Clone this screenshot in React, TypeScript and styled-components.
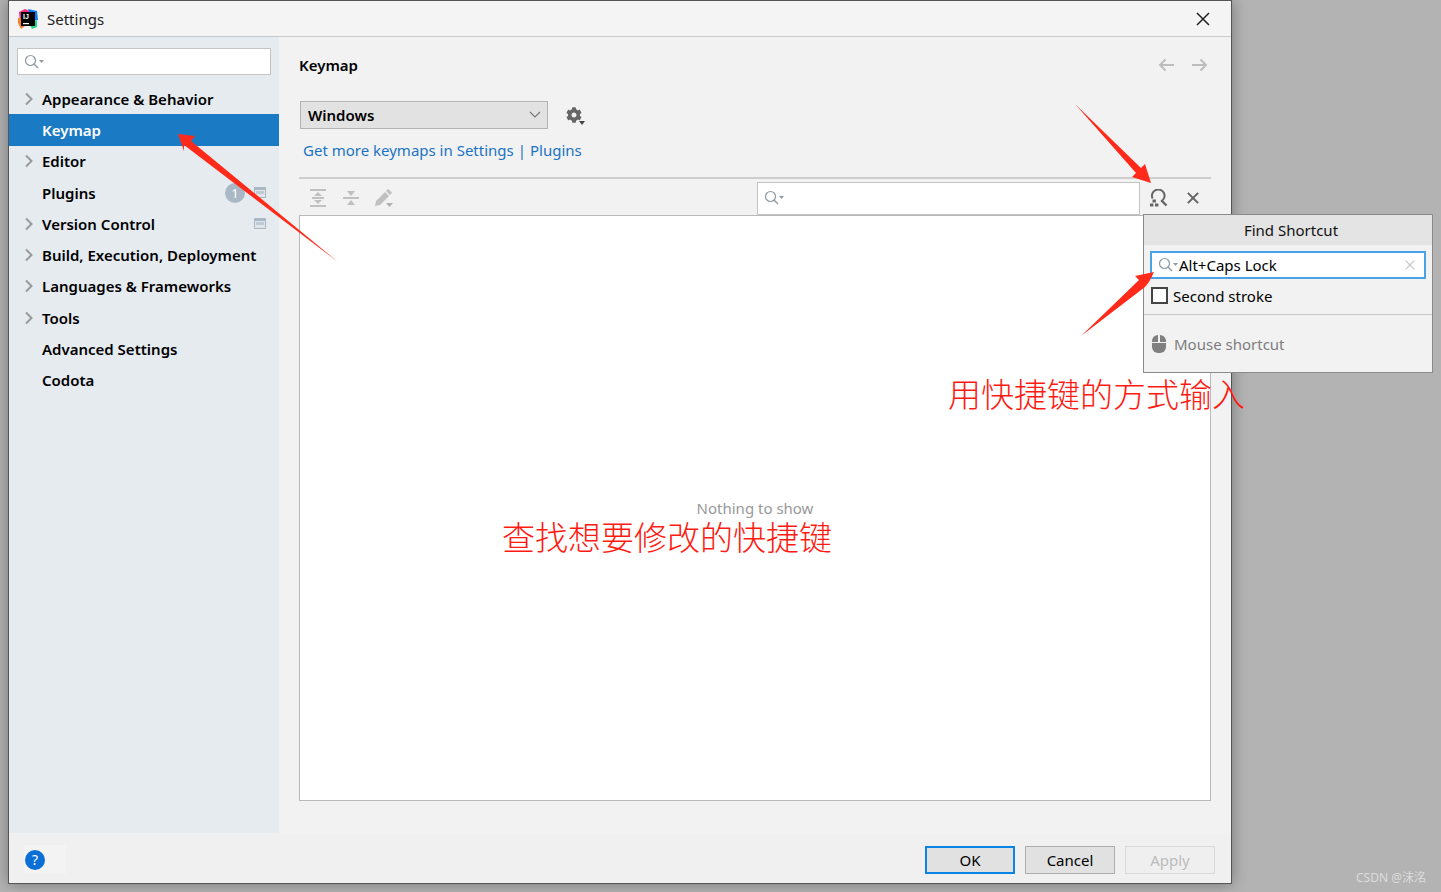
import React from 'react'
import styled, { createGlobalStyle } from 'styled-components'
import { FaCog } from 'react-icons/fa'

const GlobalStyle = createGlobalStyle`
  html, body {
    margin: 0;
    padding: 0;
    background: #b3b3b3;
    overflow: hidden;
  }
  * {
    box-sizing: border-box;
  }
`

const Page = styled.div`
  position: relative;
  width: 1441px;
  height: 892px;
  padding-left: 8px;
  overflow: hidden;
  background: #b3b3b3;
  font-family: 'Noto Sans', 'Noto Sans CJK SC', sans-serif;
  font-size: 15px;
  color: #000;
`

const Dialog = styled.div`
  display: flex;
  flex-direction: column;
  width: 1224px;
  height: 884px;
  border: 1px solid #555;
  background: #f2f2f2;
  box-shadow: 0 0 14px rgba(0, 0, 0, 0.35);
`

const TitleBar = styled.div`
  display: flex;
  align-items: center;
  flex: 0 0 36px;
  padding: 0 21px 0 9px;
  border-bottom: 1px solid #c9c9c9;
  background: #f4f4f4;
`

const TitleText = styled.span`
  margin-left: 9px;
  font-size: 15px;
  color: #222;
`

const CloseButton = styled.div`
  display: flex;
  margin-left: auto;
`

const Body = styled.div`
  display: flex;
  flex: 1;
  min-height: 0;
`

const Sidebar = styled.div`
  flex: 0 0 270px;
  padding-top: 11px;
  background: #e6ebf0;
`

const SearchBox = styled.div<{ $w?: number; $h: number }>`
  display: flex;
  align-items: center;
  width: ${({ $w }) => ($w ? `${$w}px` : '100%')};
  height: ${({ $h }) => $h}px;
  padding-left: 6px;
  border: 1px solid #c4c4c4;
  background: #fff;
`

const SidebarSearch = styled.div`
  padding: 0 8px;
`

const Tree = styled.div`
  margin-top: 8px;
`

const Row = styled.div<{ $selected?: boolean }>`
  display: flex;
  align-items: center;
  height: 31.3px;
  padding: 0 13px 0 14px;
  font-weight: 600;
  font-size: 15px;
  background: ${({ $selected }) => ($selected ? '#1b7ac4' : 'transparent')};
  color: ${({ $selected }) => ($selected ? '#fff' : '#000')};
`

const ChevronSlot = styled.span`
  display: flex;
  flex: 0 0 19px;
`

const RowEnd = styled.span`
  display: flex;
  align-items: center;
  margin-left: auto;
`

const Badge = styled.span`
  display: flex;
  align-items: center;
  justify-content: center;
  width: 20px;
  height: 20px;
  margin-right: 9px;
  border-radius: 50%;
  background: #a9b8c4;
  color: #fff;
  font-size: 13px;
  font-weight: 400;
`

const Main = styled.div`
  display: flex;
  flex-direction: column;
  flex: 1;
  min-width: 0;
  padding: 14px 20px 32px;
  background: #f2f2f2;
`

const Header = styled.div`
  display: flex;
  align-items: center;
  justify-content: space-between;
  height: 28px;
  font-weight: 600;
`

const NavArrows = styled.div`
  display: flex;
  gap: 16px;
  padding-right: 3px;
`

const KeymapRow = styled.div`
  display: flex;
  align-items: center;
  margin-top: 22px;
  padding-left: 1px;
`

const Select = styled.div`
  display: flex;
  align-items: center;
  justify-content: space-between;
  width: 248px;
  height: 28px;
  padding: 0 6px 0 7px;
  border: 1px solid #b4b4b4;
  background: #e2e2e2;
  font-weight: 600;
`

const GearButton = styled.div`
  position: relative;
  display: flex;
  margin-left: 18px;
  color: #666;
`

const GearCaret = styled.span`
  position: absolute;
  right: -3px;
  bottom: -2px;
  border: 3px solid transparent;
  border-top: 4px solid #444;
  border-bottom: 0;
`

const LinkRow = styled.div`
  display: flex;
  align-items: center;
  height: 22px;
  margin-top: 10px;
  padding-left: 4px;
  color: #333;
`

const Link = styled.a`
  color: #1a73c4;
`

const Sep = styled.span`
  margin: 0 4px;
  color: #1a73c4;
`

const Toolbar = styled.div`
  display: flex;
  align-items: center;
  height: 38px;
  margin-top: 16px;
  padding: 2px 1px 0 3px;
  border-top: 2px solid #cdcdcd;
`

const ToolButton = styled.div<{ $w: number }>`
  display: flex;
  align-items: center;
  justify-content: center;
  width: ${({ $w }) => $w}px;
`

const ToolSpacer = styled.div`
  flex: 1;
`

const ToolbarSearch = styled(SearchBox)`
  margin-right: 2px;
`

const Panel = styled.div`
  display: flex;
  align-items: center;
  justify-content: center;
  flex: 1;
  border: 1px solid #b9b9b9;
  background: #fff;
  color: #999;
`

const Footer = styled.div`
  display: flex;
  align-items: flex-start;
  flex: 0 0 50px;
  padding: 12px 16px 0 15px;
  background: #f0f0f0;
`

const HelpPatch = styled.div`
  display: flex;
  align-items: center;
  width: 42px;
  height: 29px;
  padding-left: 1px;
  background: #f3f3f3;
`

const HelpCircle = styled.div`
  display: flex;
  align-items: center;
  justify-content: center;
  width: 20px;
  height: 20px;
  border-radius: 50%;
  background: #0b6fd6;
  color: #fff;
  font-size: 14px;
`

const Buttons = styled.div`
  display: flex;
  gap: 10px;
  margin-top: 1px;
  margin-left: auto;
`

const Button = styled.div<{ $variant?: 'default' | 'disabled' }>`
  display: flex;
  align-items: center;
  justify-content: center;
  width: 90px;
  height: 28px;
  font-size: 15px;
  border: ${({ $variant }) =>
    $variant === 'default'
      ? '2px solid #0c84e4'
      : $variant === 'disabled'
        ? '1px solid #dadada'
        : '1px solid #adadad'};
  background: ${({ $variant }) => ($variant === 'disabled' ? '#efefef' : '#e1e1e1')};
  color: ${({ $variant }) => ($variant === 'disabled' ? '#bcbcbc' : '#000')};
`

const Popup = styled.div`
  position: absolute;
  left: 1143px;
  top: 214px;
  display: flex;
  flex-direction: column;
  width: 290px;
  height: 159px;
  border: 1px solid #8a8a8a;
  background: #f2f2f2;
`

const PopupTitle = styled.div`
  display: flex;
  align-items: center;
  justify-content: center;
  height: 30px;
  padding-left: 6px;
  background: #e4e4e4;
  color: #111;
`

const PopupInput = styled.div`
  display: flex;
  align-items: center;
  height: 28px;
  margin: 6px 6px 0;
  padding: 0 9px 0 6px;
  border: 2px solid #4aa3e8;
  background: #fff;
`

const PopupValue = styled.span`
  flex: 1;
  margin-left: 1px;
  color: #000;
`

const CheckRow = styled.div`
  display: flex;
  align-items: center;
  height: 31px;
  margin-top: 1px;
  padding-left: 7px;
  border-bottom: 0;
`

const CheckBox = styled.span`
  width: 17px;
  height: 17px;
  margin-right: 5px;
  border: 2px solid #444;
  background: #fff;
`

const PopupDivider = styled.div`
  height: 1px;
  margin-top: 3px;
  background: #c6c6c6;
`

const MouseRow = styled.div`
  display: flex;
  align-items: center;
  height: 56px;
  padding: 1px 0 0 8px;
  color: #7d7d7d;
`

const MouseLabel = styled.span`
  margin-left: 8px;
`

const Annotation = styled.div<{ $left: number; $top: number }>`
  position: absolute;
  left: ${({ $left }) => $left}px;
  top: ${({ $top }) => $top}px;
  font-family: 'Noto Sans CJK SC', sans-serif;
  font-size: 33px;
  line-height: 40px;
  font-weight: 300;
  color: #ff1a12;
  white-space: nowrap;
`

const ArrowLayer = styled.svg`
  position: absolute;
  left: 0;
  top: 0;
  pointer-events: none;
`

const Watermark = styled.div`
  position: absolute;
  right: 15px;
  top: 868px;
  font-size: 12px;
  color: #dcdcdc;
  white-space: nowrap;
`

const SearchIcon = ({ size = 20 }: { size?: number }) => (
  <svg width={size} height={16} viewBox="0 0 20 16" fill="none">
    <circle cx="6.5" cy="6.5" r="5" stroke="#8e9aa3" strokeWidth="1.2" />
    <path d="M10 10l4 4" stroke="#8e9aa3" strokeWidth="1.4" />
    <path d="M15 6h5l-2.5 3z" fill="#8e9aa3" />
  </svg>
)

const Chevron = () => (
  <svg width="12" height="14" viewBox="0 0 12 14" fill="none">
    <path d="M3 1.5L8.5 7 3 12.5" stroke="#9a9a9a" strokeWidth="2" />
  </svg>
)

const ProjectTag = () => (
  <svg width="12" height="11" viewBox="0 0 12 11">
    <path d="M0 0h12v11H0z" fill="#a9b8c4" />
    <path d="M1 3h10v7H1z" fill="#dfe5ea" />
    <path d="M2 4h8v3H2z" fill="#a9b8c4" opacity="0.6" />
  </svg>
)

const CloseIcon = ({ size = 14, color = '#333', width = 1.6 }: { size?: number; color?: string; width?: number }) => (
  <svg width={size} height={size} viewBox="0 0 14 14" fill="none">
    <path d="M1 1l12 12M13 1L1 13" stroke={color} strokeWidth={width} />
  </svg>
)

const NavArrow = ({ flip }: { flip?: boolean }) => (
  <svg width="17" height="14" viewBox="0 0 17 14" fill="none" transform={flip ? 'scale(-1 1)' : undefined}>
    <path d="M16 7H2M7.5 1.5L2 7l5.5 5.5" stroke="#bdbdbd" strokeWidth="2" />
  </svg>
)

const ExpandIcon = () => (
  <svg width="16" height="18" viewBox="0 0 16 18">
    <path d="M0 0h16v2H0zM0 16h16v2H0z" fill="#c0c0c0" />
    <path d="M8 3l4 4H4zM8 15l-4-4h8z" fill="#c0c0c0" />
    <path d="M2 8h12v2H2z" fill="#c0c0c0" />
  </svg>
)

const CollapseIcon = () => (
  <svg width="16" height="16" viewBox="0 0 16 16">
    <path d="M0 7h16v2H0z" fill="#c0c0c0" />
    <path d="M8 6L4 1h8zM8 10l4 5H4z" fill="#c0c0c0" />
  </svg>
)

const PencilIcon = () => (
  <svg width="19" height="18" viewBox="0 0 19 18">
    <path d="M1 17l1-5L11 3l4 4-9 9zM12 2l1.5-1.5a1 1 0 0 1 1.4 0l2.6 2.6a1 1 0 0 1 0 1.4L16 6z" fill="#c0c0c0" />
    <path d="M12 14h7l-3.5 4z" fill="#b0b0b0" />
  </svg>
)

const FindShortcutIcon = () => (
  <svg width="20" height="18" viewBox="0 0 20 18" fill="none">
    <path d="M3.6 9.5A6.3 6.3 0 1 1 12 12.4" stroke="#666" strokeWidth="2" />
    <path d="M12.5 11.5l5 5" stroke="#666" strokeWidth="2.4" />
    <path d="M3.5 10.5h3.4v3H3.5zM1 14.5h3.4v3H1zM6 14.5h3.4v3H6z" fill="#666" />
  </svg>
)

const MouseIcon = () => (
  <svg width="14" height="18" viewBox="0 0 14 18">
    <path d="M0 8h14v4a6 6 0 0 1-6 6H6a6 6 0 0 1-6-6z" fill="#808080" />
    <path d="M0 7V6a6 6 0 0 1 6-6v7zM8 0a6 6 0 0 1 6 6v1H8z" fill="#808080" />
  </svg>
)

const AppLogo = () => (
  <svg width="20" height="20" viewBox="0 0 20 20">
    <path d="M1 3l6-3 5 2-3 8-7 4z" fill="#f5317f" />
    <path d="M10 0l9 2 1 9-5 1z" fill="#087cfa" />
    <path d="M0 9l5 0 2 8-4 3-3-6z" fill="#fe7c2b" />
    <path d="M12 16l7-5 0 7-5 2z" fill="#21d789" />
    <path d="M3 3h14v14H3z" fill="#000" />
    <text x="5" y="10" fontSize="7" fontWeight="700" fill="#fff" fontFamily="'Liberation Sans', sans-serif">
      IJ
    </text>
    <path d="M5 14h6v1.2H5z" fill="#fff" />
  </svg>
)

const treeItems = [
  { label: 'Appearance & Behavior', chevron: true },
  { label: 'Keymap', selected: true },
  { label: 'Editor', chevron: true },
  { label: 'Plugins', badge: true, tag: true },
  { label: 'Version Control', chevron: true, tag: true },
  { label: 'Build, Execution, Deployment', chevron: true },
  { label: 'Languages & Frameworks', chevron: true },
  { label: 'Tools', chevron: true },
  { label: 'Advanced Settings' },
  { label: 'Codota' },
]

export default function App() {
  return (
    <Page>
      <GlobalStyle />
      <Dialog>
        <TitleBar>
          <AppLogo />
          <TitleText>Settings</TitleText>
          <CloseButton>
            <CloseIcon size={14} color="#222" width={1.5} />
          </CloseButton>
        </TitleBar>
        <Body>
          <Sidebar>
            <SidebarSearch>
              <SearchBox $h={27}>
                <SearchIcon />
              </SearchBox>
            </SidebarSearch>
            <Tree>
              {treeItems.map((item) => (
                <Row key={item.label} $selected={item.selected}>
                  <ChevronSlot>{item.chevron && <Chevron />}</ChevronSlot>
                  {item.label}
                  {item.tag && (
                    <RowEnd>
                      {item.badge && <Badge>1</Badge>}
                      <ProjectTag />
                    </RowEnd>
                  )}
                </Row>
              ))}
            </Tree>
          </Sidebar>
          <Main>
            <Header>
              Keymap
              <NavArrows>
                <NavArrow />
                <NavArrow flip />
              </NavArrows>
            </Header>
            <KeymapRow>
              <Select>
                Windows
                <svg width="12" height="8" viewBox="0 0 12 8" fill="none">
                  <path d="M1 1l5 5 5-5" stroke="#777" strokeWidth="1.2" />
                </svg>
              </Select>
              <GearButton>
                <FaCog size={16} />
                <GearCaret />
              </GearButton>
            </KeymapRow>
            <LinkRow>
              <Link>Get more keymaps in Settings</Link>
              <Sep>|</Sep>
              <Link>Plugins</Link>
            </LinkRow>
            <Toolbar>
              <ToolButton $w={32.5}>
                <ExpandIcon />
              </ToolButton>
              <ToolButton $w={32.5}>
                <CollapseIcon />
              </ToolButton>
              <ToolButton $w={32.5}>
                <PencilIcon />
              </ToolButton>
              <ToolSpacer />
              <ToolbarSearch $w={383} $h={33}>
                <SearchIcon />
              </ToolbarSearch>
              <ToolButton $w={34}>
                <FindShortcutIcon />
              </ToolButton>
              <ToolButton $w={34}>
                <CloseIcon size={12} color="#666" width={2.4} />
              </ToolButton>
            </Toolbar>
            <Panel>Nothing to show</Panel>
          </Main>
        </Body>
        <Footer>
          <HelpPatch>
            <HelpCircle>?</HelpCircle>
          </HelpPatch>
          <Buttons>
            <Button $variant="default">OK</Button>
            <Button>Cancel</Button>
            <Button $variant="disabled">Apply</Button>
          </Buttons>
        </Footer>
      </Dialog>

      <Popup>
        <PopupTitle>Find Shortcut</PopupTitle>
        <PopupInput>
          <SearchIcon />
          <PopupValue>Alt+Caps Lock</PopupValue>
          <CloseIcon size={10} color="#c4c4c4" width={1.6} />
        </PopupInput>
        <CheckRow>
          <CheckBox />
          Second stroke
        </CheckRow>
        <PopupDivider />
        <MouseRow>
          <MouseIcon />
          <MouseLabel>Mouse shortcut</MouseLabel>
        </MouseRow>
      </Popup>

      <Annotation $left={948} $top={373}>
        用快捷键的方式输入
      </Annotation>
      <Annotation $left={502} $top={516}>
        查找想要修改的快捷键
      </Annotation>

      <ArrowLayer width="1441" height="892" viewBox="0 0 1441 892">
        <path d="M178 134L195 136L191 141L338 262L184 145L184 151Z" fill="#ff2a1a" />
        <path d="M1075 104L1141 168L1145 164L1151 183L1132 177L1136 173Z" fill="#ff2a1a" />
        <path d="M1081 336L1139 280L1135 276L1154 272L1149 282L1145 287Z" fill="#ff2a1a" />
      </ArrowLayer>

      <Watermark>CSDN @沫洺</Watermark>
    </Page>
  )
}
